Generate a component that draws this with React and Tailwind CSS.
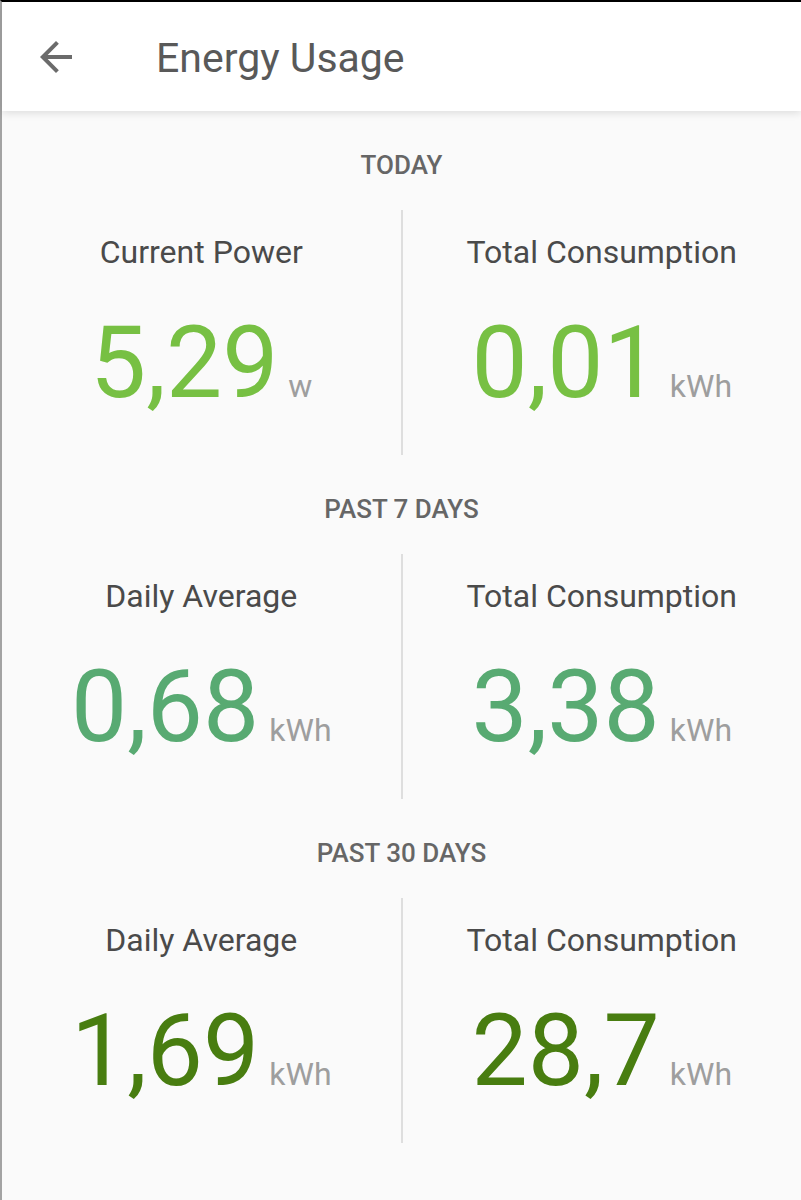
import React from 'react'

const sections = [
  {
    title: 'Today',
    color: 'text-[#77c043]',
    items: [
      { label: 'Current Power', value: '5,29', unit: 'w' },
      { label: 'Total Consumption', value: '0,01', unit: 'kWh' },
    ],
  },
  {
    title: 'Past 7 Days',
    color: 'text-[#58aa72]',
    items: [
      { label: 'Daily Average', value: '0,68', unit: 'kWh' },
      { label: 'Total Consumption', value: '3,38', unit: 'kWh' },
    ],
  },
  {
    title: 'Past 30 Days',
    color: 'text-[#487d10]',
    items: [
      { label: 'Daily Average', value: '1,69', unit: 'kWh' },
      { label: 'Total Consumption', value: '28,7', unit: 'kWh' },
    ],
  },
]

function Stat({ label, value, unit, color }) {
  return (
    <div className="flex flex-col items-center pt-[23px]">
      <div className="text-[32px] leading-[38px] text-[#4a4a4a]">{label}</div>
      <div className="mt-[42px] flex items-baseline">
        <span className={`text-[100px] leading-[100px] ${color}`}>{value}</span>
        <span className="ml-[10px] text-[32px] leading-[38px] text-[#9e9e9e]">{unit}</span>
      </div>
    </div>
  )
}

export default function App() {
  return (
    <div className="min-h-screen bg-[#fafafa] border-t-2 border-black border-l-2 border-l-[#a3a3a3] font-['Roboto',sans-serif]">
      {/* Toolbar */}
      <header className="relative z-10 h-[109px] bg-white flex items-center shadow-[0_2px_8px_rgba(0,0,0,0.12)]">
        <button className="ml-[30px] w-12 h-12 flex items-center justify-center text-[#6b6b6b]">
          <svg className="w-12 h-12" viewBox="0 0 24 24" fill="currentColor">
            <path d="M20 11H7.83l5.59-5.59L12 4l-8 8 8 8 1.41-1.41L7.83 13H20v-2z" />
          </svg>
        </button>
        <h1 className="ml-[76px] mt-[2px] text-[41px] leading-[48px] text-[#595959]">Energy Usage</h1>
      </header>

      <main>
        {sections.map((s) => (
          <section key={s.title} className="pt-[38px]">
            <h2 className="h-8 text-center text-[26px] leading-8 font-medium uppercase text-[#666666]">{s.title}</h2>
            <div className="mt-[29px] grid grid-cols-[1fr_2px_1fr] h-[245px]">
              <Stat {...s.items[0]} color={s.color} />
              <div className="bg-[#dedede]" />
              <Stat {...s.items[1]} color={s.color} />
            </div>
          </section>
        ))}
      </main>
    </div>
  )
}
